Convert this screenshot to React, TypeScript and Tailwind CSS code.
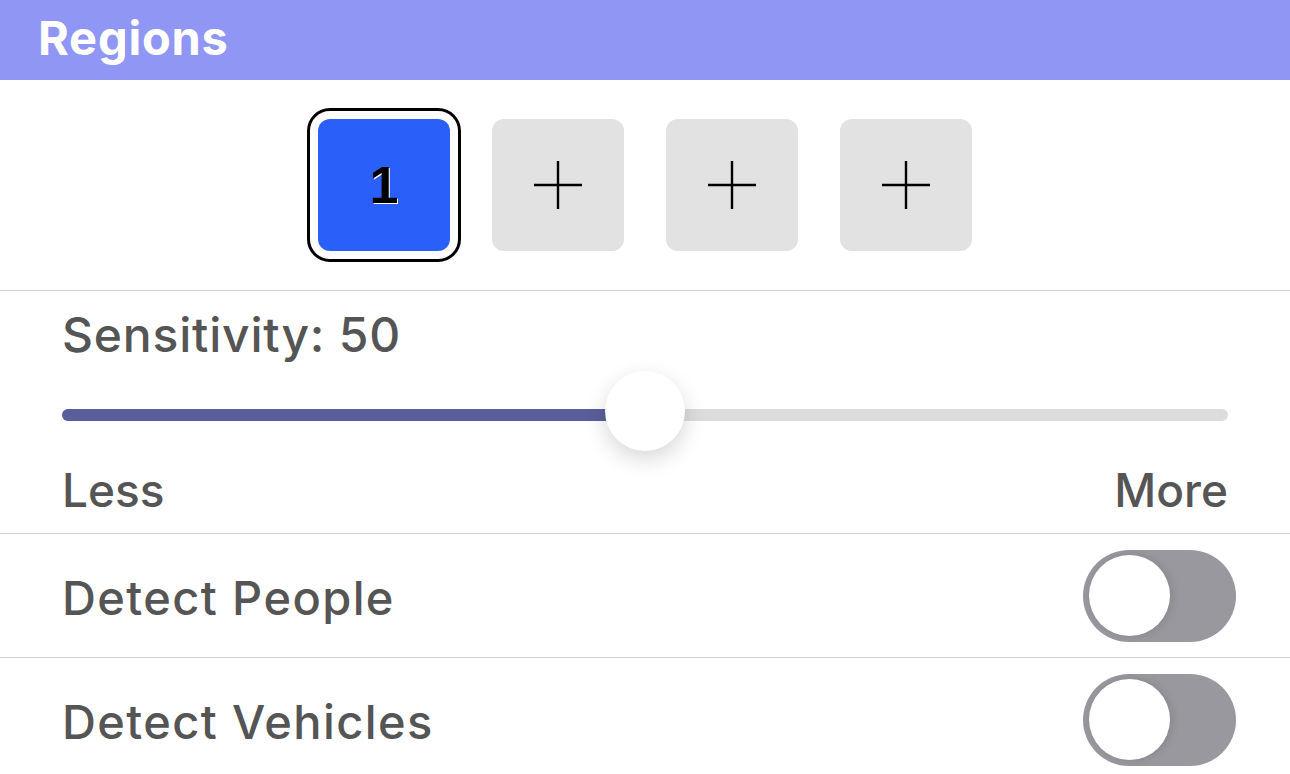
import { useState } from "react";

const font = { fontFamily: "Inter, 'Noto Sans', sans-serif" };

const RegionBox = ({ label, active }: { label?: string; active?: boolean }) => {
  if (active) {
    return (
      <div className="w-[132px] h-[132px] rounded-[12px] bg-[#2a60f9] flex items-center justify-center outline-[3px] outline-black outline-offset-[8px]">
        <span
          className="text-[52px] font-bold text-black leading-none [text-shadow:1px_1px_0_#ffffff]"
          style={{ fontFamily: "'Liberation Sans', Arial, sans-serif" }}
        >
          {label}
        </span>
      </div>
    );
  }
  return (
    <div className="w-[132px] h-[132px] rounded-[12px] bg-[#e2e2e2] flex items-center justify-center">
      <svg width="48" height="48" viewBox="0 0 48 48">
        <path d="M24 0v48M0 24h48" stroke="#000" strokeWidth="2.4" />
      </svg>
    </div>
  );
};

const Toggle = ({ on, onClick }: { on: boolean; onClick: () => void }) => (
  <button
    onClick={onClick}
    className={`w-[153px] h-[92px] rounded-full p-[6px] flex items-center ${
      on ? "bg-[#34c759] justify-end" : "bg-[#98989e] justify-start"
    }`}
  >
    <span className="w-[81px] h-[81px] rounded-full bg-white shadow-[2px_0_10px_rgba(0,0,0,0.12)]" />
  </button>
);

const ToggleRow = ({ label }: { label: string }) => {
  const [on, setOn] = useState(false);
  return (
    <div className="h-[123px] flex items-center justify-between pl-[62px] pr-[54px]">
      <span className="text-[47px] font-medium leading-none tracking-[1.4px] text-[#555555] pt-[3px]">
        {label}
      </span>
      <Toggle on={on} onClick={() => setOn(!on)} />
    </div>
  );
};

export default function App() {
  const [value] = useState(50);

  return (
    <div className="w-[1290px] h-[774px] bg-white overflow-hidden" style={font}>
      <div className="h-[80px] bg-[#8f96f3] flex items-center px-[38px] pb-[6px]">
        <h1 className="text-[47px] font-bold text-white leading-none tracking-[0.8px]">Regions</h1>
      </div>

      <div className="h-[210px] flex items-center justify-center gap-[42px]">
        <RegionBox label="1" active />
        <RegionBox />
        <RegionBox />
        <RegionBox />
      </div>

      <div className="h-px bg-[#cfcfcf]" />

      <div className="h-[242px] flex flex-col px-[62px] pt-[20px]">
        <span className="text-[48px] font-medium leading-none tracking-[0.8px] text-[#555555]">
          Sensitivity: {value}
        </span>
        <div className="relative h-[80px] mt-[16px] flex items-center">
          <div className="w-full h-[12px] rounded-full bg-[#dcdcdd] overflow-hidden">
            <div className="h-full bg-[#5a5f9c]" style={{ width: `${value}%` }} />
          </div>
          <div
            className="absolute top-[-4px] w-[80px] h-[80px] -translate-x-1/2 rounded-full bg-white shadow-[0_8px_22px_rgba(0,0,0,0.16)]"
            style={{ left: `${value}%` }}
          />
        </div>
        <div className="flex justify-between mt-[12px] text-[46px] font-medium leading-none text-[#555555]">
          <span>Less</span>
          <span>More</span>
        </div>
      </div>

      <div className="h-px bg-[#cfcfcf]" />
      <ToggleRow label="Detect People" />
      <div className="h-px bg-[#cfcfcf]" />
      <ToggleRow label="Detect Vehicles" />
    </div>
  );
}
